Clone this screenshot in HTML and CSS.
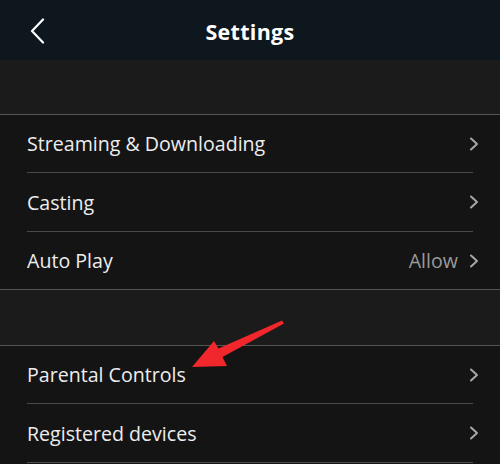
FILE: index.html
```html
<!DOCTYPE html>
<html>
<head>
<meta charset="utf-8">
<link rel="stylesheet" href="styles.css">
</head>
<body>
<div class="page">
  <header class="topbar">
    <svg class="back" width="16" height="26" viewBox="0 0 16 26"><path d="M13 1.5 L2 13 L13 24.5" fill="none" stroke="#fff" stroke-width="2.2" stroke-linecap="round" stroke-linejoin="round"/></svg>
    <h1 class="title">Settings</h1>
  </header>
  <div class="gap"></div>
  <section class="group">
    <div class="row"><span class="label">Streaming &amp; Downloading</span><span class="right"><svg class="chev" width="10" height="14" viewBox="0 0 10 14"><path d="M2 1.5 L8 7 L2 12.5" fill="none" stroke="#a8a8a8" stroke-width="2" stroke-linecap="round" stroke-linejoin="round"/></svg></span></div>
    <div class="row"><span class="label">Casting</span><span class="right"><svg class="chev" width="10" height="14" viewBox="0 0 10 14"><path d="M2 1.5 L8 7 L2 12.5" fill="none" stroke="#a8a8a8" stroke-width="2" stroke-linecap="round" stroke-linejoin="round"/></svg></span></div>
    <div class="row last"><span class="label">Auto Play</span><span class="right"><span class="value">Allow</span><svg class="chev" width="10" height="14" viewBox="0 0 10 14"><path d="M2 1.5 L8 7 L2 12.5" fill="none" stroke="#a8a8a8" stroke-width="2" stroke-linecap="round" stroke-linejoin="round"/></svg></span></div>
  </section>
  <div class="gap"></div>
  <section class="group open">
    <div class="row"><span class="label">Parental Controls</span><span class="right"><svg class="chev" width="10" height="14" viewBox="0 0 10 14"><path d="M2 1.5 L8 7 L2 12.5" fill="none" stroke="#a8a8a8" stroke-width="2" stroke-linecap="round" stroke-linejoin="round"/></svg></span></div>
    <div class="row"><span class="label">Registered devices</span><span class="right"><svg class="chev" width="10" height="14" viewBox="0 0 10 14"><path d="M2 1.5 L8 7 L2 12.5" fill="none" stroke="#a8a8a8" stroke-width="2" stroke-linecap="round" stroke-linejoin="round"/></svg></span></div>
  </section>
  <svg class="arrow" width="500" height="464" viewBox="0 0 500 464"><polygon points="192,367 214,341 218.5,348.5 282,320.5 284,323.5 222.5,357 227,366" fill="#f2272c"/></svg>
</div>
</body>
</html>
```
FILE: styles.css
```css
html, body { margin: 0; padding: 0; }
body {
  width: 500px;
  height: 464px;
  overflow: hidden;
  background: #141414;
  font-family: "Open Sans", "Noto Sans", sans-serif;
  color: #ececec;
}
.page { position: relative; width: 500px; height: 464px; }
.topbar {
  height: 60px;
  background: #0f171e;
  display: flex;
  align-items: center;
  justify-content: center;
  position: relative;
}
.back { position: absolute; left: 30px; top: 18px; }
.title {
  margin: 0;
  font-size: 21.5px;
  font-weight: 700;
  color: #fff;
  letter-spacing: 0.3px;
  padding-top: 2px;
}
.gap {
  height: 54px;
  background: #1b1b1b;
  border-bottom: 1px solid #555;
}
.gap + .group + .gap { height: 55px; }
.group { background: #141414; border-bottom: 1px solid #555; }
.group.open { border-bottom: none; }
.row {
  box-sizing: border-box;
  height: 58px;
  margin-left: 27px;
  margin-right: 27px;
  border-bottom: 1px solid #4a4a4a;
  display: flex;
  align-items: center;
  justify-content: space-between;
}
.row:nth-child(2) { height: 59px; }
.row.last { border-bottom: none; height: 57px; }
.label { font-size: 19.6px; color: #ededed; }
.right { display: flex; align-items: center; gap: 11px; margin-right: -6px; }
.value { font-size: 19.6px; color: #9a9a9a; }
.chev { display: block; }
.arrow { position: absolute; left: 0; top: 0; pointer-events: none; }
```
